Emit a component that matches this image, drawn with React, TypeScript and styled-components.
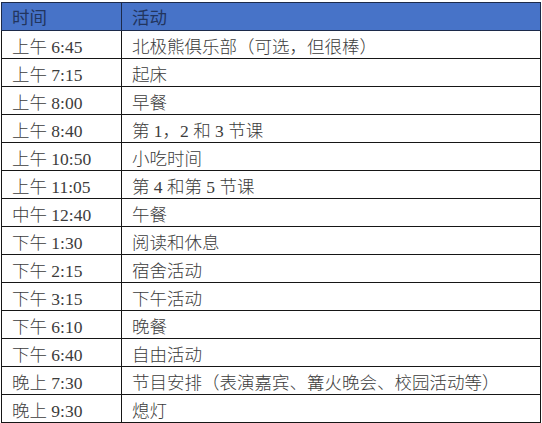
import React from 'react';
import styled, { createGlobalStyle } from 'styled-components';

const GlobalStyle = createGlobalStyle`
    html, body {
        margin: 0;
        padding: 0;
        background: #ffffff;
    }
    body {
        padding: 2px 1px 0 1px;
        font-family: 'Liberation Serif', 'Noto Sans CJK SC', serif;
    }
`;

const schedule = [
    { time: '上午 6:45', activity: '北极熊俱乐部（可选，但很棒）' },
    { time: '上午 7:15', activity: '起床' },
    { time: '上午 8:00', activity: '早餐' },
    { time: '上午 8:40', activity: '第 1，2 和 3 节课' },
    { time: '上午 10:50', activity: '小吃时间' },
    { time: '上午 11:05', activity: '第 4 和第 5 节课' },
    { time: '中午 12:40', activity: '午餐' },
    { time: '下午 1:30', activity: '阅读和休息' },
    { time: '下午 2:15', activity: '宿舍活动' },
    { time: '下午 3:15', activity: '下午活动' },
    { time: '下午 6:10', activity: '晚餐' },
    { time: '下午 6:40', activity: '自由活动' },
    { time: '晚上 7:30', activity: '节目安排（表演嘉宾、篝火晚会、校园活动等）' },
    { time: '晚上 9:30', activity: '熄灯' },
];

const Table = styled.table`
    width: 540px;
    border-collapse: collapse;
    table-layout: fixed;
    font-size: 17.5px;
    font-weight: 300;
    color: #3c3c3c;
    text-spacing-trim: space-all;
`;

const HeadCell = styled.th<{ $wide?: boolean }>`
    width: ${props => (props.$wide ? 'auto' : '120px')};
    height: 28px;
    padding: 0 0 0 10px;
    background-color: #4773c8;
    color: #22355e;
    font-weight: normal;
    text-align: left;
    border: 1px solid #1c2a4a;
    box-sizing: border-box;
`;

const Row = styled.tr`
    height: 28px;
`;

const Cell = styled.td`
    padding: 1px 0 0 10px;
    border: 1px solid #161616;
    white-space: nowrap;
    vertical-align: middle;
`;

const App = () => {
    return (
        <>
            <GlobalStyle />
            <Table>
                <thead>
                    <tr>
                        <HeadCell>时间</HeadCell>
                        <HeadCell $wide>活动</HeadCell>
                    </tr>
                </thead>
                <tbody>
                    {schedule.map(item => (
                        <Row key={item.time}>
                            <Cell>{item.time}</Cell>
                            <Cell>{item.activity}</Cell>
                        </Row>
                    ))}
                </tbody>
            </Table>
        </>
    );
};

export default App;
